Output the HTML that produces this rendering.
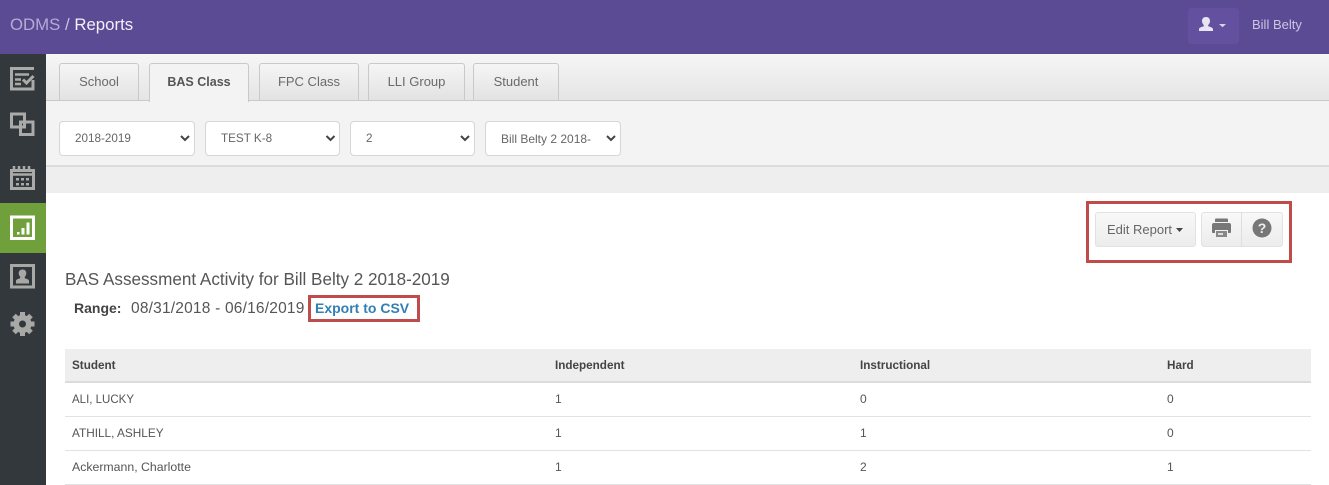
<!DOCTYPE html>
<html><head><meta charset="utf-8">
<style>
html,body{margin:0;padding:0;width:1329px;height:485px;overflow:hidden;background:#fff;font-family:"Liberation Sans",sans-serif;color:#555}
#r{position:absolute;left:0;top:0;width:1329px;height:485px;overflow:hidden;filter:blur(.3px)}
div,a,span{position:absolute;box-sizing:border-box;white-space:nowrap}
svg{position:absolute;display:block}
.tab{top:63px;height:38px;border:1px solid #c9c9c9;border-radius:3px 3px 0 0;background:linear-gradient(#f5f5f5,#e2e2e2);text-align:center;line-height:35px;font-size:13px;color:#6a6a6a}
.sel{top:121px;height:35px;background:#fff;border:1px solid #d6d6d6;border-radius:4px;font-size:11.7px;line-height:34px;padding-left:15px;color:#666}
.t{font-size:12px;color:#555;line-height:14px}
.b{font-weight:bold;color:#444;font-size:11.7px}
.l{left:65px;width:1246px;height:1px;background:#e2e2e2}
</style></head><body><div id="r">
<div style="left:0;top:0;width:1329px;height:54px;background:#5b4a94"></div>
<div style="left:10px;top:15px;font-size:16.800px;line-height:20px;color:#b5abd6">ODMS <span style="position:static;color:#c9c2e2">/</span> <span style="position:static;color:#f2f0f8;font-weight:500">Reports</span></div>
<div style="left:1188px;top:8px;width:51px;height:36px;background:#63509f;border-radius:3px"></div>
<svg style="left:1198px;top:15px" width="30" height="18" viewBox="0 0 30 18"><path d="M8 2c2.600 0 4 1.700 4 4 0 1.700-.8 3.100-1.800 4v1.300c2 .7 4.800 1.300 4.800 3v1.700H1v-1.700c0-1.700 2.800-2.300 4.800-3V10C4.800 9.100 4 7.700 4 6c0-2.300 1.400-4 4-4z" fill="#e8e4f3"/><path d="M21 9h7l-3.500 3.200z" fill="#d8d2ea"/></svg>
<div style="left:1252px;top:17px;font-size:13px;line-height:16px;color:#cdc6e4">Bill Belty</div>

<div style="left:0;top:54px;width:46px;height:431px;background:#33383c"></div>
<div style="left:0;top:203px;width:46px;height:50px;background:#6fa03c"></div>
<svg style="left:0;top:54px" width="46" height="431" viewBox="0 54 46 431" fill="none">
<g stroke="#aaaaa8" stroke-width="3">
<path d="M34 68.500H11.500V89H33V80"/>
<path d="M15 74.500h14M15 79.500h6M15 84h6" stroke-width="2.500"/>
<path d="M23 79.500l3.500 3.500 7-7"/>
<rect x="11.500" y="114" width="13" height="13"/><rect x="20.500" y="122" width="12.500" height="12.500"/>
<rect x="11.500" y="170.500" width="22" height="18"/>
</g>
<path d="M11 174.500h23M14 166v5M19 166v5M24 166v5M29 166v5" stroke="#aaaaa8" stroke-width="2.500"/>
<path d="M16 178h3v2.500h-3zM21 178h3v2.500h-3zM26 178h3v2.500h-3zM16 183h3v2.500h-3zM21 183h3v2.500h-3zM26 183h3v2.500h-3z" fill="#aaaaa8"/>
<rect x="11.500" y="217" width="22" height="21.500" stroke="#fff" stroke-width="3"/>
<path d="M17 232h2.500v2.500H17zM21.500 228h3v6.500h-3zM26.500 222.500h3v12h-3z" fill="#fff"/>
<rect x="11.500" y="265.500" width="22" height="21.500" stroke="#a8a8a6" stroke-width="3"/>
<path d="M22.500 269.500c2.500 0 3.800 1.600 3.800 3.800 0 1.500-.7 2.800-1.500 3.500v1.500c2 .7 4.200 1.200 4.200 2.700v2.500H16V281c0-1.500 2.200-2 4.200-2.700v-1.500c-.8-.7-1.500-2-1.500-3.500 0-2.200 1.300-3.800 3.800-3.800z" fill="#a8a8a6"/>
<path d="M22.500 312v24M10.500 324h24M14 315.500l17 17M31 315.500l-17 17" stroke="#a8a8a6" stroke-width="5"/>
<circle cx="22.500" cy="324" r="9" fill="#a8a8a6"/>
<circle cx="22.500" cy="324" r="3.500" fill="#33383c"/>
</svg>

<div style="left:46px;top:54px;width:1283px;height:47px;background:linear-gradient(#f6f6f6,#e4e4e4)"></div>
<div style="left:46px;top:100px;width:1283px;height:1px;background:#c9c9c9"></div>
<div style="left:46px;top:101px;width:1283px;height:65px;background:#f3f3f3"></div>
<div style="left:46px;top:165px;width:1283px;height:2px;background:#dcdcdc"></div>
<div style="left:46px;top:167px;width:1283px;height:26px;background:#eeeeee"></div>

<div class="tab" style="left:59px;width:80px">School</div>
<div class="tab" style="left:149px;width:100px;height:39px;background:#f3f3f3;border-bottom:none;font-weight:bold;font-size:12.500px;line-height:36px;color:#555">BAS Class</div>
<div class="tab" style="left:259px;width:100px">FPC Class</div>
<div class="tab" style="left:368px;width:97px">LLI Group</div>
<div class="tab" style="left:473px;width:86px">Student</div>

<div class="sel" style="left:59px;width:136px">2018-2019</div>
<div class="sel" style="left:205px;width:135px">TEST K-8</div>
<div class="sel" style="left:350px;width:125px">2</div>
<div class="sel" style="left:485px;width:136px;font-size:12px">Bill Belty 2 2018-</div>
<svg style="left:0;top:130px" width="640" height="16" fill="none" stroke="#444" stroke-width="2"><path d="M181 6l4 4 4-4M326.500 6l4 4 4-4M461 6l4 4 4-4M607 6l4 4 4-4"/></svg>

<div style="left:1086px;top:201px;width:206px;height:62px;border:3px solid #bf4b4b"></div>
<div style="left:1095px;top:212px;width:101px;height:35px;border:1px solid #e2e2e2;border-radius:3px;background:linear-gradient(#f8f8f8,#ececec);font-size:13px;line-height:33px;padding-left:11px;color:#666">Edit Report</div>
<svg style="left:1176px;top:228px" width="8" height="5"><path d="M0 0h7L3.500 4z" fill="#444"/></svg>
<div style="left:1201px;top:212px;width:82px;height:35px;border:1px solid #e2e2e2;border-radius:3px;background:linear-gradient(#f8f8f8,#ececec)"></div>
<div style="left:1241px;top:212px;width:1px;height:35px;background:#dedede"></div>
<svg style="left:1211px;top:218px" width="22" height="22"><path d="M4 1.500q0-1 1-1h11q1 0 1 1V4H4zM1 7q0-2 2-2h15q2 0 2 2v7q0 1-1 1h-2v-3H4v3H2q-1 0-1-1z" fill="#777"/><path d="M5 13h11v6H5z" fill="#888"/><rect x="7" y="15" width="5" height="2" fill="#ddd"/></svg>
<svg style="left:1252px;top:218px" width="20" height="20"><circle cx="10" cy="10" r="9.500" fill="#777"/><text x="10" y="15" font-family="Liberation Sans" font-size="14" font-weight="bold" fill="#eee" text-anchor="middle">?</text></svg>

<div style="left:65px;top:270px;font-size:17.100px;line-height:20px;color:#555">BAS Assessment Activity for Bill Belty 2 2018-2019</div>
<div style="left:74px;top:300px;font-size:14px;line-height:17px;font-weight:bold;color:#444">Range:</div>
<div style="left:131px;top:300px;font-size:15.500px;line-height:17px;color:#555;letter-spacing:.2px">08/31/2018 - 06/16/2019</div>
<div style="left:308px;top:295px;width:112px;height:27px;border:3px solid #bf4b4b"></div>
<a style="left:315px;top:300px;font-size:14px;line-height:17px;font-weight:bold;color:#3180b4">Export to CSV</a>

<div style="left:65px;top:349px;width:1246px;height:33px;background:#eeeeee"></div>
<div style="left:65px;top:381px;width:1246px;height:2px;background:#dcdcdc"></div>
<div class="l" style="top:416px"></div>
<div class="l" style="top:450px"></div>
<div class="l" style="top:484px"></div>

<div class="t b" style="left:72px;top:359px">Student</div>
<div class="t b" style="left:555px;top:359px">Independent</div>
<div class="t b" style="left:860px;top:359px">Instructional</div>
<div class="t b" style="left:1167px;top:359px">Hard</div>

<div class="t" style="left:72px;top:393px;font-size:11.500px">ALI, LUCKY</div>
<div class="t" style="left:555px;top:392px">1</div>
<div class="t" style="left:860px;top:392px">0</div>
<div class="t" style="left:1167px;top:392px">0</div>

<div class="t" style="left:72px;top:426px;font-size:11.800px">ATHILL, ASHLEY</div>
<div class="t" style="left:555px;top:426px">1</div>
<div class="t" style="left:860px;top:426px">1</div>
<div class="t" style="left:1167px;top:426px">0</div>

<div class="t" style="left:72px;top:460px;font-size:12.300px">Ackermann, Charlotte</div>
<div class="t" style="left:555px;top:460px">1</div>
<div class="t" style="left:860px;top:460px">2</div>
<div class="t" style="left:1167px;top:460px">1</div>
</div></body></html>
